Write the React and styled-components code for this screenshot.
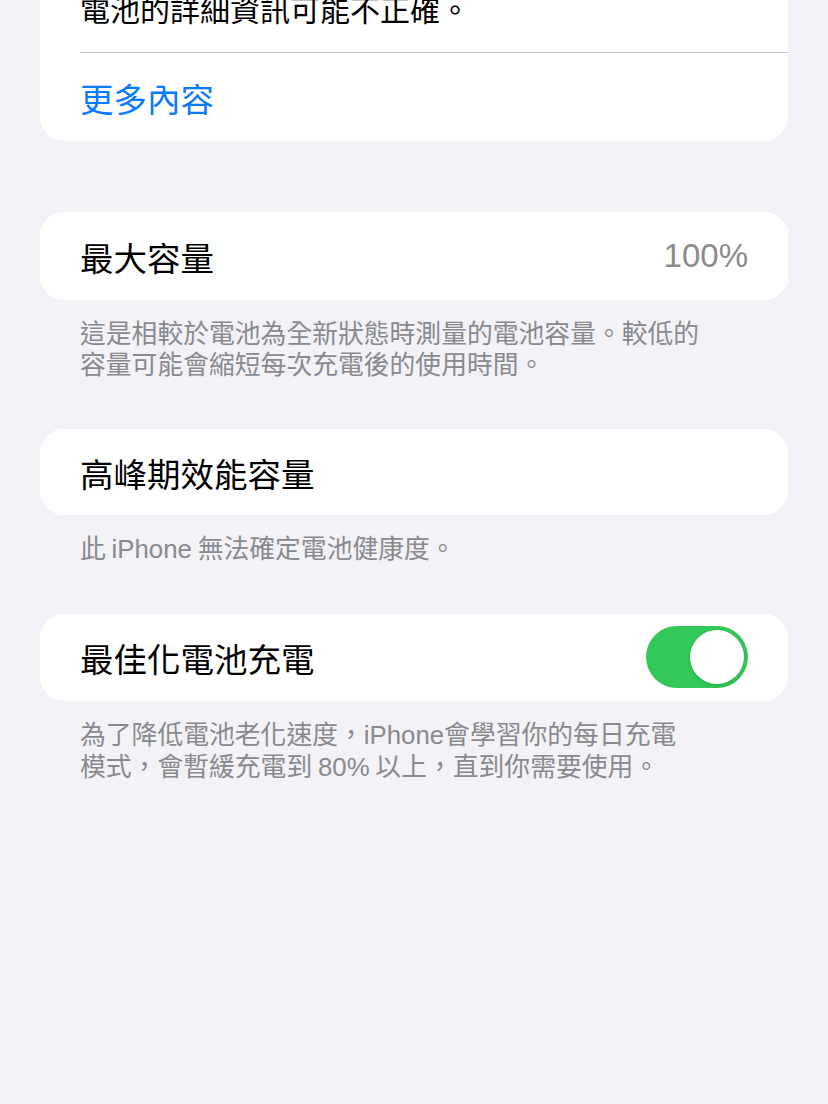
import React, { useState } from "react";
import styled, { createGlobalStyle } from "styled-components";

const GlobalStyle = createGlobalStyle`
    html, body {
        margin: 0;
        padding: 0;
        background: #f2f2f7;
    }
    body {
        font-family: "Noto Sans CJK TC", "Noto Sans", sans-serif;
        -webkit-font-smoothing: antialiased;
    }
`

const Page = styled.div`
    width: 828px;
    height: 1104px;
    overflow: hidden;
    padding: 0 40px;
    box-sizing: border-box;
    background: #f2f2f7;
`

const Card = styled.div`
    background: #ffffff;
    border-radius: 24px;
    margin-top: ${(p) => p.$top || 0}px;
    overflow: hidden;
`

const Row = styled.div`
    height: ${(p) => p.$height || 88}px;
    display: flex;
    align-items: center;
    justify-content: space-between;
    padding: 0 40px;
    box-sizing: border-box;
    font-size: ${(p) => p.$size || 33.5}px;
    color: ${(p) => (p.$link ? "#0a7aff" : "#000000")};
`

const Separator = styled.div`
    height: 1px;
    background: #c6c6c8;
    margin-left: 40px;
`

const Value = styled.span`
    color: #8a8a8e;
    font-family: "Liberation Sans", "Noto Sans", sans-serif;
    font-size: 33px;
`

const Footer = styled.p`
    margin: 0 0 51px;
    padding: 16px 40px 0;
    font-size: 25.8px;
    line-height: 31px;
    color: #8a8a8e;
`

const Latin = styled.span`
    font-family: "Liberation Sans", sans-serif;
    line-height: 1;
`

const Switch = styled.button`
    width: 102px;
    height: 62px;
    border-radius: 31px;
    border: none;
    padding: 0;
    background: ${(p) => (p.$on ? "#34c759" : "#e9e9eb")};
    position: relative;
    cursor: pointer;
`

const Knob = styled.span`
    position: absolute;
    top: 4px;
    left: ${(p) => (p.$on ? "44px" : "4px")};
    width: 54px;
    height: 54px;
    border-radius: 50%;
    background: #ffffff;
    box-shadow: 0 2px 4px rgba(0, 0, 0, 0.12);
`

export default function App() {
    const [optimized, setOptimized] = useState(true);

    return (
        <>
            <GlobalStyle />
            <Page>
                <Card $top={-36}>
                    <Row $size={30}>電池的詳細資訊可能不正確。</Row>
                    <Separator />
                    <Row $link>更多內容</Row>
                </Card>

                <Card $top={71}>
                    <Row>
                        最大容量
                        <Value>100%</Value>
                    </Row>
                </Card>
                <Footer>
                    這是相較於電池為全新狀態時測量的電池容量。較低的
                    <br />
                    容量可能會縮短每次充電後的使用時間。
                </Footer>

                <Card>
                    <Row $height={86}>高峰期效能容量</Row>
                </Card>
                <Footer>
                    此 <Latin>iPhone</Latin> 無法確定電池健康度。
                </Footer>

                <Card>
                    <Row $height={87}>
                        最佳化電池充電
                        <Switch $on={optimized} onClick={() => setOptimized(!optimized)}>
                            <Knob $on={optimized} />
                        </Switch>
                    </Row>
                </Card>
                <Footer>
                    為了降低電池老化速度，<Latin>iPhone</Latin>會學習你的每日充電
                    <br />
                    模式，會暫緩充電到 <Latin>80%</Latin> 以上，直到你需要使用。
                </Footer>
            </Page>
        </>
    );
}
